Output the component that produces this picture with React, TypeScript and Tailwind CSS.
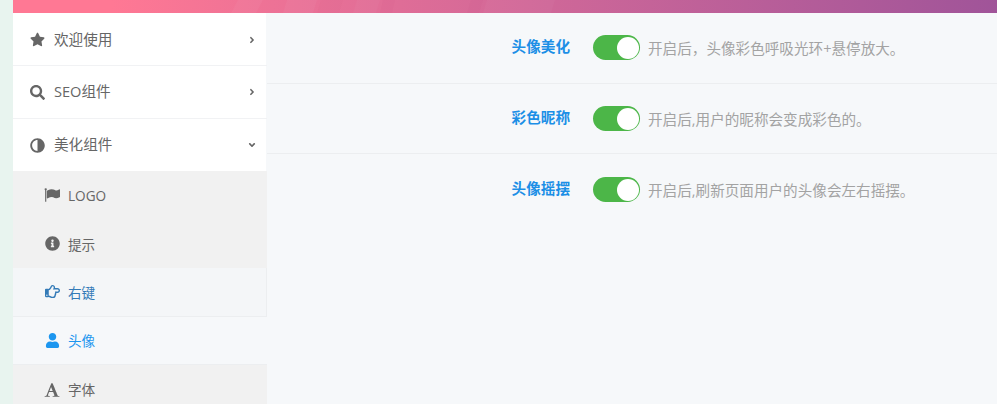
import { FaStar, FaSearch, FaAdjust, FaInfoCircle, FaRegHandPointRight, FaUser, FaAngleRight, FaAngleDown } from 'react-icons/fa';
import type { ReactNode } from 'react';

const font = 'font-["Open_Sans","Noto_Sans_CJK_SC",sans-serif]';

function FlagIcon() {
  return (
    <svg viewBox="0 0 1792 1792" className="h-[16px] w-[16px]" fill="currentColor">
      <path d="M320 256q0 72-64 110v1266q0 13-9.5 22.5t-22.5 9.5h-64q-13 0-22.5-9.5t-9.5-22.5v-1266q-64-38-64-110 0-53 37.5-90.5t90.5-37.5 90.5 37.5 37.5 90.5zm1472 64v763q0 25-12.5 38.5t-39.5 27.5q-215 116-369 116-61 0-123.5-22t-108.5-48-115.5-48-142.5-22q-192 0-464 146-17 9-33 9-26 0-45-19t-19-45v-742q0-32 31-55 21-14 79-43 236-120 421-120 107 0 200 29t219 88q38 19 88 19 54 0 117.5-21t110-47 88-47 54.5-21q26 0 45 19t19 45z" />
    </svg>
  );
}

function SerifFontIcon() {
  return (
    <svg viewBox="0 0 1792 1792" className="h-[16px] w-[16px]" fill="currentColor">
      <path d="M789 559l-170 450q33 0 136.5 2t160.5 2q19 0 57-2-87-253-184-452zm-725 1105l2-79q23-7 56-12.5t57-10.5 49.5-14.5 44.5-29 31-50.5l237-616 280-724h128q8 14 11 21l205 480q33 78 106 257.5t114 274.5q15 34 58 144.5t72 168.5q20 45 35 57 19 15 88 29.5t84 20.5q6 38 6 57 0 5-.5 13.5t-.5 12.5q-63 0-190-8t-191-8q-76 0-215 7t-178 8q0-43 4-78l131-28q1 0 12.5-2.5t15.5-3.5 14.5-4.5 15-6.5 11-8 9-11 2.5-14q0-16-31-96.5t-72-177.5-42-100l-450-2q-26 58-76.5 195.5t-50.5 162.5q0 22 14 37.5t43.5 24.5 48.5 13.5 57 8.5 41 4q1 19 1 58 0 9-2 27-58 0-174.5-10t-174.5-10q-8 0-26.5 4t-21.5 4q-80 14-188 14z" />
    </svg>
  );
}

function TopItem({ icon, label, open, rowClass }: { icon: ReactNode; label: string; open?: boolean; rowClass: string }) {
  return (
    <div className={`flex items-center border-r border-r-[#f6f8fa] bg-white pl-[16.5px] pr-[9px] text-[14.6px] text-[#666] ${rowClass}`}>
      <span className="flex w-[16px] justify-center text-[15px] text-[#666]">{icon}</span>
      <span className="ml-[8.5px] flex-1">{label}</span>
      <span className="text-[10px] text-[#666]">{open ? <FaAngleDown /> : <FaAngleRight />}</span>
    </div>
  );
}

function SubItem({ icon, label, className }: { icon: ReactNode; label: string; className: string }) {
  return (
    <div className={`flex h-[48.6px] items-center pl-[31px] text-[13.6px] ${className}`}>
      <span className="flex w-[16px] justify-center text-[15px]">{icon}</span>
      <span className="ml-[8px] pt-[2px]">{label}</span>
    </div>
  );
}

function SettingRow({ label, desc, rowClass }: { label: string; desc: string; rowClass: string }) {
  return (
    <div className={`flex items-start ${rowClass}`}>
      <div className="w-[303px] pt-[1px] text-right text-[14.6px] leading-[20px] font-bold text-[#1c8fe6]">{label}</div>
      <div className="ml-[23px] flex h-[25px] w-[47px] items-center justify-end rounded-full bg-[#4cb648] pr-[1.5px]">
        <span className="h-[22px] w-[22px] rounded-full bg-white" />
      </div>
      <div className="ml-[8px] pt-[3px] text-[14.6px] leading-[20px] text-[#a3a3a3]">{desc}</div>
    </div>
  );
}

export default function App() {
  return (
    <div className={`flex h-[404px] w-[997px] overflow-hidden bg-[#e8f4ef] ${font}`}>
      <div className="w-[13px] shrink-0" />
      <div className="flex min-w-0 flex-1 flex-col">
        <div className="relative h-[13px] shrink-0 bg-gradient-to-r from-[#ff7894] from-[10%] to-[#a05499]">
          {/* faint texture in the header band */}
          <svg className="absolute inset-0 h-full w-full" viewBox="0 0 984 13" preserveAspectRatio="none">
            <polygon points="218,13 225,0 250,0 243,13" fill="#ffffff" fillOpacity="0.04" />
            <polygon points="270,13 274,0 304,0 300,13" fill="#ffffff" fillOpacity="0.04" />
            <polygon points="304,13 308,0 330,0 326,13" fill="#b0306a" fillOpacity="0.03" />
            <polygon points="340,13 344,0 367,0 363,13" fill="#ffffff" fillOpacity="0.03" />
            <polygon points="367,13 370,0 382,0 379,13" fill="#b0306a" fillOpacity="0.04" />
            <polygon points="454,13 458,0 470,0 466,13" fill="#b0306a" fillOpacity="0.04" />
            <polygon points="470,13 474,0 542,0 538,13" fill="#ffffff" fillOpacity="0.03" />
          </svg>
        </div>
        <div className="flex min-h-0 flex-1">
          <div className="w-[254px] shrink-0 overflow-hidden bg-[#f6f8fa]">
            <div className="h-[53px] border-b border-[#f1f2f4]">
              <TopItem icon={<FaStar />} label="欢迎使用" rowClass="h-full pt-[1px]" />
            </div>
            <div className="h-[53px] border-b border-[#f1f2f4]">
              <TopItem icon={<FaSearch />} label="SEO组件" rowClass="h-full" />
            </div>
            <TopItem icon={<FaAdjust className="-scale-x-100" />} label="美化组件" open rowClass="h-[52px]" />
            <div>
              <SubItem icon={<FlagIcon />} label="LOGO" className="bg-[#f1f1f1] text-[#666]" />
              <SubItem icon={<FaInfoCircle />} label="提示" className="bg-[#f1f1f1] text-[#666]" />
              <SubItem icon={<FaRegHandPointRight />} label="右键" className="border-r border-b border-[#eceef0] bg-[#f4f6f8] text-[#337ab7]" />
              <SubItem icon={<FaUser />} label="头像" className="border-b border-[#eceef0] bg-[#f6f8fa] text-[#1c96ef]" />
              <SubItem icon={<SerifFontIcon />} label="字体" className="bg-[#f1f1f1] text-[#666]" />
            </div>
          </div>
          <div className="min-w-0 flex-1 bg-[#f6f8fa]">
            <SettingRow label="头像美化" desc="开启后，头像彩色呼吸光环+悬停放大。" rowClass="h-[71px] border-b border-[#eceef0] pt-[22px]" />
            <SettingRow label="彩色昵称" desc="开启后,用户的昵称会变成彩色的。" rowClass="h-[70px] border-b border-[#eceef0] pt-[22px]" />
            <SettingRow label="头像摇摆" desc="开启后,刷新页面用户的头像会左右摇摆。" rowClass="pt-[23px]" />
          </div>
        </div>
      </div>
    </div>
  );
}
